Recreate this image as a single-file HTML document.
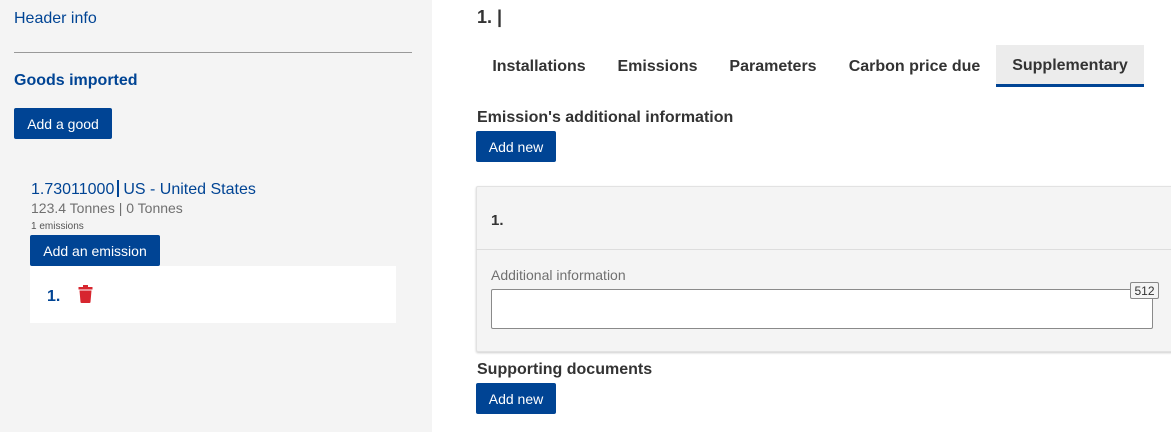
<!DOCTYPE html>
<html><head><meta charset="utf-8"><style>
*{box-sizing:border-box;margin:0;padding:0}
body{width:1171px;height:432px;overflow:hidden;font-family:"Liberation Sans",Arial,sans-serif;background:#fff;position:relative}
.abs{position:absolute;white-space:nowrap}
.left{position:absolute;left:0;top:0;width:432px;height:432px;background:#f4f4f4}
.btn{position:absolute;background:#004494;color:#fff;font-size:14px;border-radius:2px;display:flex;align-items:center;justify-content:center}
.blue{color:#004494}
.tab{position:absolute;top:47px;height:40px;font-size:16px;font-weight:bold;color:#333;display:flex;align-items:center;justify-content:center}
</style></head><body>
<div class="left">
<div class="abs blue" style="left:14px;top:10px;font-size:16px">Header info</div>
<div class="abs" style="left:14px;top:52px;width:398px;height:1px;background:#999"></div>
<div class="abs blue" style="left:14px;top:72px;font-size:16px;font-weight:bold">Goods imported</div>
<div class="btn" style="left:14px;top:108px;width:98px;height:31px">Add a good</div>
<div class="abs blue" style="left:31px;top:180px;font-size:16px">1.73011000<span style="display:inline-block;width:2px;height:17px;background:#004494;vertical-align:-3px;margin:0 4px 0 3px"></span>US - United States</div>
<div class="abs" style="left:31px;top:200px;font-size:14px;color:#707070">123.4 Tonnes | 0 Tonnes</div>
<div class="abs" style="left:31px;top:221px;font-size:10px;color:#555">1 emissions</div>
<div class="btn" style="left:30px;top:235px;width:130px;height:31px">Add an emission</div>
<div class="abs" style="left:30px;top:266px;width:366px;height:57px;background:#fff"></div>
<div class="abs blue" style="left:47px;top:288px;font-size:16px;font-weight:bold">1.</div>
<svg class="abs" style="left:78px;top:285px" width="15" height="18" viewBox="0 0 15 18"><rect x="0.5" y="2" width="14" height="2.5" fill="#d7262f"/><rect x="5" y="0" width="5" height="2.5" fill="#d7262f"/><path d="M1.5 5.5h12l-1 11.5a1 1 0 0 1-1 1h-8a1 1 0 0 1-1-1z" fill="#d7262f"/></svg>
</div>
<div class="abs" style="left:477px;top:7px;font-size:18px;font-weight:bold;color:#333">1. |</div>
<div class="tab" style="left:476px;width:126px">Installations</div>
<div class="tab" style="left:602px;width:111px">Emissions</div>
<div class="tab" style="left:713px;width:120px">Parameters</div>
<div class="tab" style="left:833px;width:163px">Carbon price due</div>
<div class="tab" style="left:996px;top:45px;height:42px;width:148px;background:#ececec;border-bottom:3px solid #004494;padding-top:2px">Supplementary</div>
<div class="abs" style="left:477px;top:109px;font-size:16px;font-weight:bold;color:#333">Emission's additional information</div>
<div class="btn" style="left:476px;top:131px;width:80px;height:31px">Add new</div>
<div class="abs" style="left:476px;top:186px;width:700px;height:166px;background:#f4f4f4;border:1px solid #e2e2e2;box-shadow:0 1px 2px rgba(0,0,0,.2);border-radius:2px"></div>
<div class="abs" style="left:476px;top:249px;width:700px;height:1px;background:#ddd"></div>
<div class="abs" style="left:491px;top:212px;font-size:15px;font-weight:bold;color:#333">1.</div>
<div class="abs" style="left:491px;top:267px;font-size:14px;color:#707070">Additional information</div>
<div class="abs" style="left:491px;top:289px;width:662px;height:40px;background:#fff;border:1px solid #8a8a8a;border-radius:2px"></div>
<div class="abs" style="left:1130px;top:282px;width:29px;height:17px;background:#f4f4f4;border:1px solid #888;border-radius:2px;font-size:12px;color:#333;display:flex;align-items:center;justify-content:center">512</div>
<div class="abs" style="left:477px;top:361px;font-size:16px;font-weight:bold;color:#333">Supporting documents</div>
<div class="btn" style="left:476px;top:383px;width:80px;height:31px">Add new</div>
</body></html>
